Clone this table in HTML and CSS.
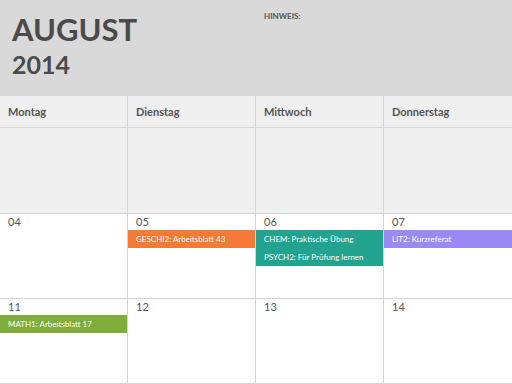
FILE: index.html
```html
<!DOCTYPE html>
<html lang="de">
<head>
  <meta charset="UTF-8">
  <meta name="viewport" content="width=device-width, initial-scale=1.0">
  <title>Hausaufgaben-Kalender August 2014</title>
  <link rel="stylesheet" href="styles.css">
</head>
<body>

  <!-- Kopfbereich: Monat, Jahr und Hinweisfeld -->
  <div class="top">
    <div class="title">
      <div class="month">AUGUST</div>
      <div class="year">2014</div>
    </div>
    <div class="note">HINWEIS:</div>
  </div>

  <!-- Kalender: eine Zeile Wochentage, dann die Wochen -->
  <div class="calendar">
    <div class="dayname">Montag</div>
    <div class="dayname">Dienstag</div>
    <div class="dayname">Mittwoch</div>
    <div class="dayname">Donnerstag</div>

    <div class="day empty"></div>
    <div class="day empty"></div>
    <div class="day empty"></div>
    <div class="day empty"></div>

    <div class="day"><div class="date">04</div></div>
    <div class="day">
      <div class="date">05</div>
      <div class="event orange">GESCHI2: Arbeitsblatt 43</div>
    </div>
    <div class="day">
      <div class="date">06</div>
      <div class="event teal">CHEM: Praktische Übung</div>
      <div class="event teal">PSYCH2: Für Prüfung lernen</div>
    </div>
    <div class="day">
      <div class="date">07</div>
      <div class="event purple">LIT2: Kurzreferat</div>
    </div>

    <div class="day">
      <div class="date">11</div>
      <div class="event green">MATH1: Arbeitsblatt 17</div>
    </div>
    <div class="day"><div class="date">12</div></div>
    <div class="day"><div class="date">13</div></div>
    <div class="day"><div class="date">14</div></div>
  </div>

</body>
</html>
```

FILE: styles.css
```css
* {
  margin: 0;
  padding: 0;
  box-sizing: border-box;
}

body {
  font-family: Lato, "Open Sans", sans-serif;
  color: #555;
  background-color: #fff;
  overflow: hidden;
}

/* Kopfbereich */
.top {
  display: flex;
  height: 96px;
  background-color: #d9d9d9;
}

.title {
  width: 264px;
  padding: 10px 0 0 12px;
  color: #4a4a4a;
  font-weight: bold;
}

.month {
  font-size: 31px;
  line-height: 38px;
}

.year {
  font-size: 25px;
  line-height: 32px;
}

.note {
  padding-top: 11px;
  font-size: 8px;
  font-weight: bold;
  color: #555;
}

/* Kalenderraster */
.calendar {
  display: grid;
  grid-template-columns: repeat(4, 128px);
  grid-template-rows: 32px 86px 85px 85px;
}

.dayname {
  padding-left: 8px;
  line-height: 31px;
  font-size: 11px;
  font-weight: bold;
  color: #555;
  background-color: #efefef;
  border-right: 1px solid #d4d4d4;
  border-bottom: 1px solid #d4d4d4;
}

.day {
  border-right: 1px solid #d4d4d4;
  border-bottom: 1px solid #d4d4d4;
}

.dayname:nth-child(4n),
.day:nth-child(4n) {
  border-right: none;
}

.day.empty {
  background-color: #efefef;
}

.date {
  padding-left: 8px;
  font-size: 11px;
  line-height: 16px;
  color: #555;
}

.event {
  height: 18px;
  padding-left: 8px;
  font-size: 8px;
  line-height: 18px;
  color: #fff;
  white-space: nowrap;
}

.orange {
  background-color: #f47a36;
}

.teal {
  background-color: #21a38f;
}

.purple {
  background-color: #9b8af5;
}

.green {
  background-color: #7fac3a;
}
```
